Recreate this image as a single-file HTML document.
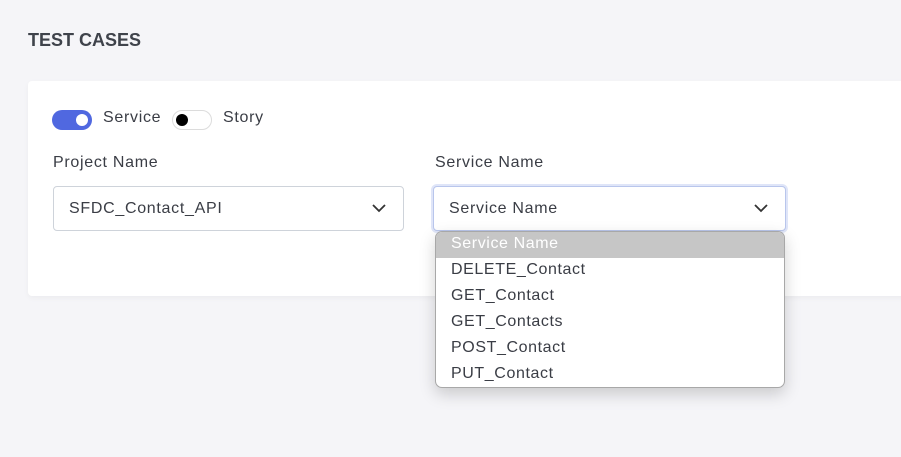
<!DOCTYPE html>
<html><head><style>
body{margin:0;width:901px;height:457px;background:#f5f5f8;font-family:"Liberation Sans",sans-serif;color:#3a3d45;position:relative;overflow:hidden}
.t{position:absolute;left:28px;top:30px;font-size:18px;font-weight:bold;color:#3f434b}
.card{position:absolute;left:28px;top:81px;width:900px;height:215px;background:#fff;border-radius:4px;box-shadow:0 2px 6px rgba(0,0,0,.04)}
.tog{position:absolute;top:110px;width:40px;height:20px;border-radius:10px}
.lbl{position:absolute;font-size:16px;letter-spacing:0.7px;color:#3a3d45}
.sel{position:absolute;top:186px;height:45px;border:1px solid #ced3da;border-radius:4px;background:#fff;font-size:16px;letter-spacing:0.7px;line-height:43px;padding-left:15px;box-sizing:border-box}
.sel svg{position:absolute;right:17px;top:17px}
.dd{position:absolute;left:435px;top:231px;width:350px;height:157px;background:#fff;border:1px solid #a8a8a8;border-radius:7px;box-sizing:border-box;overflow:hidden;box-shadow:0 6px 16px rgba(0,0,0,.18);font-size:16px;letter-spacing:0.6px}
.dd div{height:26px;line-height:24px;padding-left:15px;color:#3a3d45}
.dd .h{background:#c6c6c6;color:#fff}
</style></head><body>
<div class="t">TEST CASES</div>
<div class="card"></div>
<div class="tog" style="left:52px;background:#5068e0"><div style="position:absolute;right:4px;top:4px;width:12px;height:12px;border-radius:50%;background:#fff"></div></div>
<div class="lbl" style="left:103px;top:109px">Service</div>
<div class="tog" style="left:172px;border:1px solid #dcdcdc;box-sizing:border-box;background:#fff"><div style="position:absolute;left:3px;top:3px;width:12px;height:12px;border-radius:50%;background:#000"></div></div>
<div class="lbl" style="left:223px;top:109px">Story</div>
<div class="lbl" style="left:53px;top:154px">Project Name</div>
<div class="lbl" style="left:435px;top:154px">Service Name</div>
<div class="sel" style="left:53px;width:351px">SFDC_Contact_API<svg width="14" height="9" viewBox="0 0 14 9"><path d="M1 1l6 6 6-6" fill="none" stroke="#333" stroke-width="1.8"/></svg></div>
<div class="sel" style="left:433px;width:353px;border-color:#b9c6ec;box-shadow:0 0 0 2px #dfe5f8">Service Name<svg width="14" height="9" viewBox="0 0 14 9"><path d="M1 1l6 6 6-6" fill="none" stroke="#333" stroke-width="1.8"/></svg></div>
<div class="dd">
<div class="h">Service Name</div>
<div>DELETE_Contact</div>
<div>GET_Contact</div>
<div>GET_Contacts</div>
<div>POST_Contact</div>
<div>PUT_Contact</div>
</div>
</body></html>
